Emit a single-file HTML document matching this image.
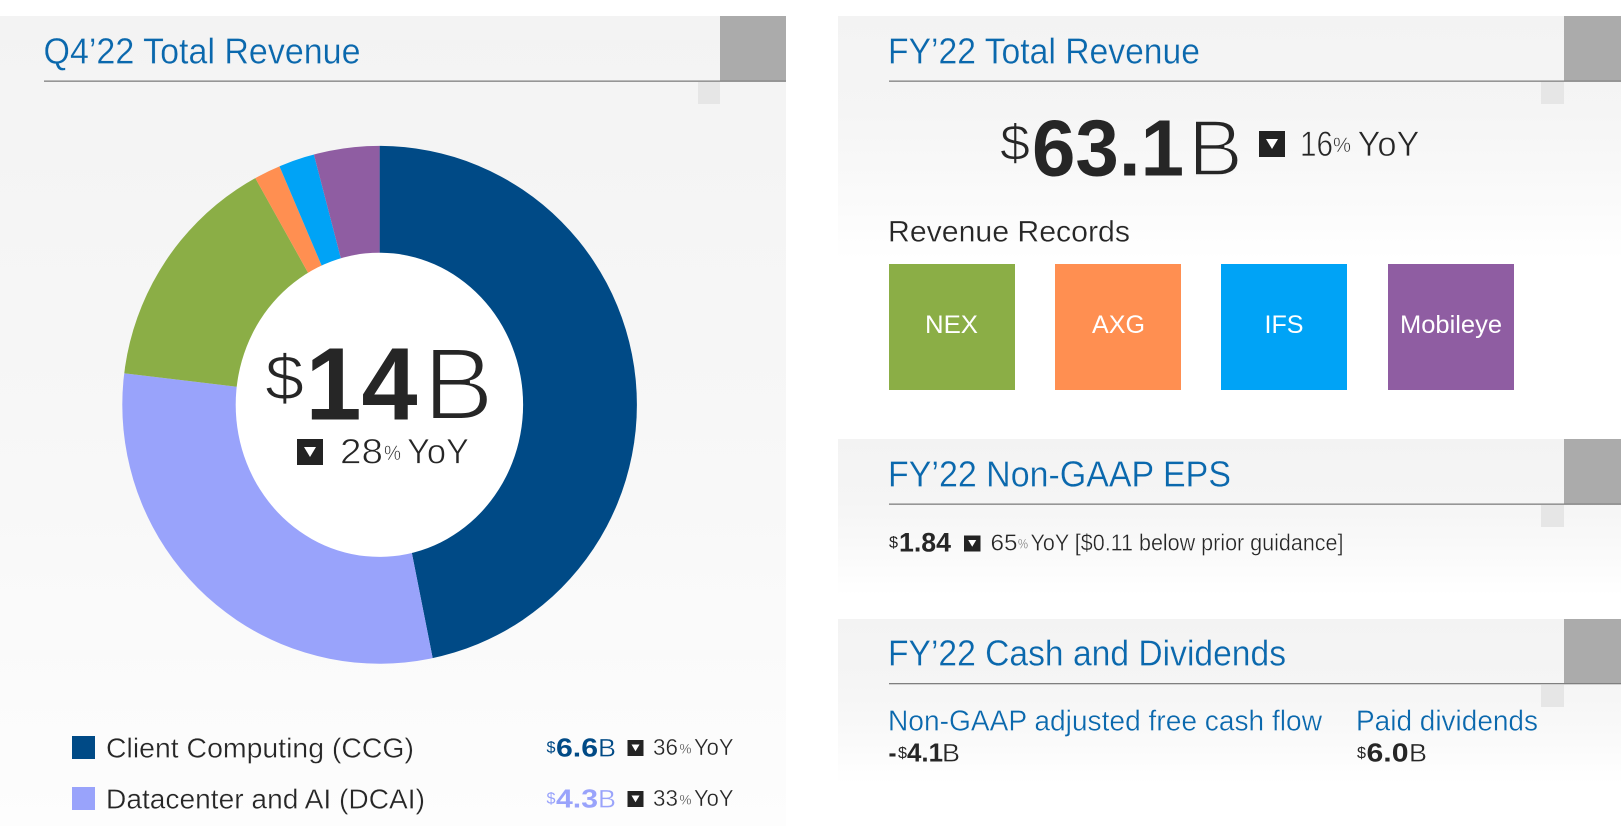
<!DOCTYPE html>
<html><head><meta charset="utf-8"><style>
html,body{margin:0;padding:0;background:#fff;width:1621px;height:826px;overflow:hidden}
svg{display:block}
text{font-family:"Liberation Sans",sans-serif;fill:#262626}
.t{fill:#0a68ad;font-size:36.5px;stroke:#f3f3f3;stroke-width:.3px}
.l{stroke:#fafafa;stroke-width:.35px}
.b{font-weight:700}
.w{fill:#fff;font-size:25px}
.bl{fill:#0a68ad}
</style></head><body>
<svg width="1621" height="826" viewBox="0 0 1621 826" xmlns="http://www.w3.org/2000/svg">
<defs>
<linearGradient id="g1" x1="0" y1="0" x2="0" y2="1"><stop offset="0" stop-color="#f3f3f3"/><stop offset=".5" stop-color="#f7f7f7"/><stop offset="1" stop-color="#fdfdfd"/></linearGradient>
<linearGradient id="g2" x1="0" y1="0" x2="0" y2="1"><stop offset="0" stop-color="#f3f3f3"/><stop offset=".4" stop-color="#f5f5f5"/><stop offset=".8" stop-color="#fbfbfb"/><stop offset="1" stop-color="#fff"/></linearGradient>
<path id="tri" d="M0 0H12L6 10Z"/>
<clipPath id="oc"><ellipse cx="379.6" cy="404.8" rx="257.3" ry="258.9"/></clipPath>
</defs>
<rect width="1621" height="826" fill="#fff"/>
<rect x="0" y="16" width="786" height="810" fill="url(#g1)"/>
<rect x="838" y="16" width="783" height="244" fill="url(#g2)"/>
<rect x="838" y="439" width="783" height="156" fill="url(#g2)"/>
<rect x="838" y="619" width="783" height="165" fill="url(#g2)"/>

<!-- header decorations -->
<rect x="720" y="16" width="66" height="65" fill="#ababab"/>
<rect x="698" y="82" width="22" height="22" fill="#e6e6e6"/>
<rect x="44" y="80.5" width="742" height="1.3" fill="#7f7f7f"/>
<rect x="1564" y="16" width="57" height="65" fill="#ababab"/>
<rect x="1541" y="82" width="23" height="22" fill="#e6e6e6"/>
<rect x="889" y="80.5" width="732" height="1.3" fill="#7f7f7f"/>
<rect x="1564" y="439" width="57" height="65" fill="#ababab"/>
<rect x="1541" y="505" width="23" height="22" fill="#e6e6e6"/>
<rect x="889" y="503.5" width="732" height="1.3" fill="#7f7f7f"/>
<rect x="1564" y="619" width="57" height="65" fill="#ababab"/>
<rect x="1541" y="685" width="23" height="22" fill="#e6e6e6"/>
<rect x="889" y="683" width="732" height="1.3" fill="#7f7f7f"/>

<!-- titles -->
<text class="t" x="43.5" y="63.4" textLength="317" lengthAdjust="spacingAndGlyphs">Q4’22 Total Revenue</text>
<text class="t" x="888" y="63.4" textLength="312" lengthAdjust="spacingAndGlyphs">FY’22 Total Revenue</text>
<text class="t" x="888" y="486.4" textLength="343" lengthAdjust="spacingAndGlyphs">FY’22 Non-GAAP EPS</text>
<text class="t" x="888" y="665.6" textLength="398" lengthAdjust="spacingAndGlyphs">FY’22 Cash and Dividends</text>

<!-- donut -->
<g clip-path="url(#oc)">
<polygon fill="#004a86" points="379.6,405 379.6,100 700,100 700,700 438,685 432.6,657.7 411.9,553.3"/>
<polygon fill="#99a3fb" points="379.6,405 411.9,553.3 438,685 438,700 100,700 100,370.4 124,373.3 236.7,386.7"/>
<polygon fill="#8bae46" points="379.6,405 236.7,386.7 100,370.4 100,100 244,100 244,158 255.8,179 307.5,271.7"/>
<polygon fill="#ff8f51" points="379.6,405 307.5,271.7 244,158 244,100 270,100 270,144 321.4,265"/>
<polygon fill="#00a3f6" points="379.6,405 321.4,265 270,144 270,100 307,100 307,128 340.6,257.3"/>
<polygon fill="#8f5da2" points="379.6,405 340.6,257.3 307,128 307,100 379.6,100"/>
</g>
<ellipse cx="379.4" cy="404.8" rx="143.7" ry="152.1" fill="#fff"/>

<!-- center -->
<text x="265" y="400" font-size="64" textLength="39" lengthAdjust="spacingAndGlyphs" style="stroke:#fff;stroke-width:1.2px">$</text>
<text class="b" x="305.5" y="419.5" font-size="103" textLength="112" lengthAdjust="spacingAndGlyphs">14</text>
<text x="423" y="419.5" font-size="103" textLength="71" lengthAdjust="spacingAndGlyphs" style="stroke:#fff;stroke-width:3px">B</text>
<rect x="297" y="439" width="26" height="26" fill="#232323"/>
<use href="#tri" x="304" y="447" fill="#fff"/>
<text x="340" y="463.7" font-size="35" textLength="43" lengthAdjust="spacingAndGlyphs" style="stroke:#fff;stroke-width:.7px">28</text>
<text x="384" y="460" font-size="21" textLength="17" lengthAdjust="spacingAndGlyphs" style="stroke:#fff;stroke-width:.5px">%</text>
<text x="407" y="463.7" font-size="35" textLength="62" lengthAdjust="spacingAndGlyphs" style="stroke:#fff;stroke-width:.7px">YoY</text>

<!-- legend -->
<rect x="72" y="736" width="23" height="23" fill="#004a86"/>
<rect x="72" y="787" width="23" height="23" fill="#99a3fb"/>
<text class="l" x="106" y="757.3" font-size="27.5" textLength="308" lengthAdjust="spacingAndGlyphs">Client Computing (CCG)</text>
<text class="l" x="106" y="808.3" font-size="27.5" textLength="319" lengthAdjust="spacingAndGlyphs">Datacenter and AI (DCAI)</text>

<text x="546.5" y="752.5" font-size="16" textLength="9" lengthAdjust="spacingAndGlyphs" style="fill:#004a86">$</text>
<text class="b" x="556" y="756.7" font-size="26" textLength="42" lengthAdjust="spacingAndGlyphs" style="fill:#004a86">6.6</text>
<text class="l" x="598" y="756.7" font-size="25" textLength="18" lengthAdjust="spacingAndGlyphs" style="fill:#004a86">B</text>
<rect x="627.5" y="740" width="16" height="16" fill="#232323"/>
<use href="#tri" transform="translate(631.5 744.5) scale(.67)" fill="#fff"/>
<text class="l" x="653" y="755" font-size="23" textLength="25" lengthAdjust="spacingAndGlyphs">36</text>
<text x="679.5" y="753.3" font-size="14" textLength="12" lengthAdjust="spacingAndGlyphs" style="stroke:#fafafa;stroke-width:.3px">%</text>
<text class="l" x="694" y="755" font-size="23" textLength="39.5" lengthAdjust="spacingAndGlyphs">YoY</text>

<text x="546.5" y="803.5" font-size="16" textLength="9" lengthAdjust="spacingAndGlyphs" style="fill:#99a3fb">$</text>
<text class="b" x="556" y="807.7" font-size="26" textLength="42" lengthAdjust="spacingAndGlyphs" style="fill:#99a3fb">4.3</text>
<text class="l" x="598" y="807.7" font-size="25" textLength="18" lengthAdjust="spacingAndGlyphs" style="fill:#99a3fb">B</text>
<rect x="627.5" y="791" width="16" height="16" fill="#232323"/>
<use href="#tri" transform="translate(631.5 795.5) scale(.67)" fill="#fff"/>
<text class="l" x="653" y="806" font-size="23" textLength="25" lengthAdjust="spacingAndGlyphs">33</text>
<text x="679.5" y="804.3" font-size="14" textLength="12" lengthAdjust="spacingAndGlyphs" style="stroke:#fafafa;stroke-width:.3px">%</text>
<text class="l" x="694" y="806" font-size="23" textLength="39.5" lengthAdjust="spacingAndGlyphs">YoY</text>

<!-- FY revenue -->
<text x="1000" y="160" font-size="51" textLength="30" lengthAdjust="spacingAndGlyphs" style="stroke:#f6f6f6;stroke-width:1px">$</text>
<text class="b" x="1032" y="175.5" font-size="80" textLength="152" lengthAdjust="spacingAndGlyphs">63.1</text>
<text x="1188" y="175.5" font-size="80" textLength="55" lengthAdjust="spacingAndGlyphs" style="stroke:#f7f7f7;stroke-width:2.4px">B</text>
<rect x="1259" y="131" width="26" height="26" fill="#232323"/>
<use href="#tri" x="1266" y="139" fill="#fff"/>
<text x="1300" y="156" font-size="35" textLength="33" lengthAdjust="spacingAndGlyphs" style="stroke:#f6f6f6;stroke-width:.7px">16</text>
<text x="1333" y="152" font-size="21" textLength="18" lengthAdjust="spacingAndGlyphs" style="stroke:#f6f6f6;stroke-width:.5px">%</text>
<text x="1357.5" y="156" font-size="35" textLength="62" lengthAdjust="spacingAndGlyphs" style="stroke:#f6f6f6;stroke-width:.7px">YoY</text>

<text x="888" y="241.3" font-size="29.5" textLength="242" lengthAdjust="spacingAndGlyphs" style="stroke:#fcfcfc;stroke-width:.3px">Revenue Records</text>

<rect x="889" y="264" width="126" height="126" fill="#8bae46"/>
<rect x="1055" y="264" width="126" height="126" fill="#ff8f51"/>
<rect x="1221" y="264" width="126" height="126" fill="#00a3f6"/>
<rect x="1388" y="264" width="126" height="126" fill="#8f5da2"/>
<text class="w" x="925" y="333" textLength="53" lengthAdjust="spacingAndGlyphs">NEX</text>
<text class="w" x="1092" y="333" textLength="53" lengthAdjust="spacingAndGlyphs">AXG</text>
<text class="w" x="1264.5" y="333" textLength="39" lengthAdjust="spacingAndGlyphs">IFS</text>
<text class="w" x="1400" y="333" textLength="102" lengthAdjust="spacingAndGlyphs">Mobileye</text>

<!-- EPS -->
<text x="889" y="547.5" font-size="16" textLength="9" lengthAdjust="spacingAndGlyphs">$</text>
<text class="b" x="899" y="551.7" font-size="27" textLength="52" lengthAdjust="spacingAndGlyphs">1.84</text>
<rect x="964" y="535.5" width="16.5" height="16" fill="#232323"/>
<use href="#tri" transform="translate(968.2 540) scale(.67)" fill="#fff"/>
<text class="l" x="990.5" y="550.7" font-size="23" textLength="27" lengthAdjust="spacingAndGlyphs">65</text>
<text x="1018" y="548.3" font-size="14" textLength="10" lengthAdjust="spacingAndGlyphs" style="fill:#555;stroke:#fafafa;stroke-width:.3px">%</text>
<text class="l" x="1030.5" y="550.7" font-size="23" textLength="313" lengthAdjust="spacingAndGlyphs">YoY [$0.11 below prior guidance]</text>

<!-- Cash -->
<text class="l bl" x="888" y="730.5" font-size="28.5" textLength="434" lengthAdjust="spacingAndGlyphs">Non-GAAP adjusted free cash flow</text>
<text class="l bl" x="1356" y="730.5" font-size="28.5" textLength="182" lengthAdjust="spacingAndGlyphs">Paid dividends</text>
<text class="b" x="888.5" y="761.7" font-size="26" textLength="8" lengthAdjust="spacingAndGlyphs">-</text>
<text x="898" y="758" font-size="16" textLength="9" lengthAdjust="spacingAndGlyphs">$</text>
<text class="b" x="907" y="761.7" font-size="26" textLength="36" lengthAdjust="spacingAndGlyphs">4.1</text>
<text class="l" x="942" y="761.7" font-size="25" textLength="18" lengthAdjust="spacingAndGlyphs">B</text>
<text x="1357" y="758" font-size="16" textLength="9" lengthAdjust="spacingAndGlyphs">$</text>
<text class="b" x="1366.5" y="761.7" font-size="26" textLength="42" lengthAdjust="spacingAndGlyphs">6.0</text>
<text class="l" x="1409" y="761.7" font-size="25" textLength="18" lengthAdjust="spacingAndGlyphs">B</text>
</svg>
</body></html>
